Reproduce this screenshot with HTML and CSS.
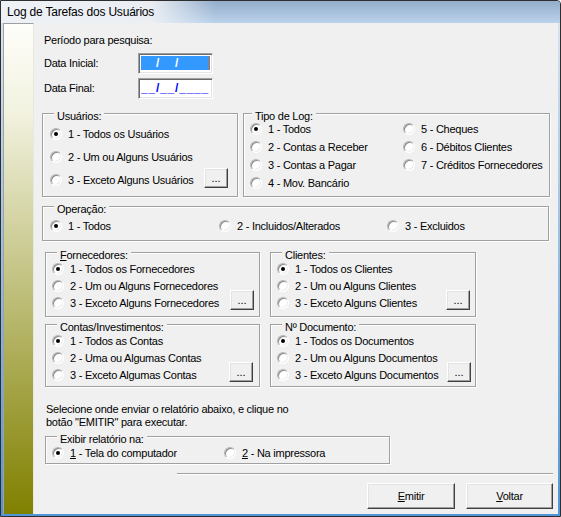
FILE: index.html
```html
<!DOCTYPE html>
<html lang="pt-BR">
<head>
<meta charset="utf-8">
<title>Log de Tarefas dos Usuários</title>
<link rel="stylesheet" href="styles.css">
</head>
<body>
<div class="window">
  <div class="titlebar"><span class="title">Log de Tarefas dos Usuários</span></div>
  <div class="frame">
    <div class="sidebar"></div>
    <main class="content">
      <div class="caption">Período para pesquisa:</div>
      <div class="field-row first">
        <span class="field-label">Data Inicial:</span>
        <span class="input"><span class="mask selected"><span class="blank">__</span>/<span class="blank">__</span>/<span class="blank">____</span></span></span>
      </div>
      <div class="field-row second">
        <span class="field-label">Data Final:</span>
        <span class="input"><span class="mask">__/__/____</span></span>
      </div>

      <div class="group-row row-a">
        <section class="group g-usuarios">
          <div class="legend">Usuários:</div>
          <div class="opts">
            <div class="opt"><span class="radio on"></span>1 - Todos os Usuários</div>
            <div class="opt"><span class="radio"></span>2 - Um ou Alguns Usuários</div>
            <div class="opt"><span class="radio"></span>3 - Exceto Alguns Usuários<button class="more">...</button></div>
          </div>
        </section>
        <section class="group g-tipo">
          <div class="legend">Tipo de Log:</div>
          <div class="opts tipo-grid">
            <div class="opt"><span class="radio on"></span>1 - Todos</div>
            <div class="opt"><span class="radio"></span>2 - Contas a Receber</div>
            <div class="opt"><span class="radio"></span>3 - Contas a Pagar</div>
            <div class="opt"><span class="radio"></span>4 - Mov. Bancário</div>
            <div class="opt"><span class="radio"></span>5 - Cheques</div>
            <div class="opt"><span class="radio"></span>6 - Débitos Clientes</div>
            <div class="opt"><span class="radio"></span>7 - Créditos Fornecedores</div>
          </div>
        </section>
      </div>

      <section class="group g-operacao">
        <div class="legend">Operação:</div>
        <div class="opts inline">
          <div class="opt w1"><span class="radio on"></span>1 - Todos</div>
          <div class="opt w2"><span class="radio"></span>2 - Incluidos/Alterados</div>
          <div class="opt"><span class="radio"></span>3 - Excluidos</div>
        </div>
      </section>

      <div class="group-row row-c">
        <section class="group g-left g-forn">
          <div class="legend"><u>F</u>ornecedores:</div>
          <div class="opts">
            <div class="opt"><span class="radio on"></span>1 - Todos os Fornecedores</div>
            <div class="opt"><span class="radio"></span>2 - Um ou Alguns Fornecedores</div>
            <div class="opt"><span class="radio"></span>3 - Exceto Alguns Fornecedores<button class="more">...</button></div>
          </div>
        </section>
        <section class="group g-right g-cli">
          <div class="legend">Clientes:</div>
          <div class="opts">
            <div class="opt"><span class="radio on"></span>1 - Todos os Clientes</div>
            <div class="opt"><span class="radio"></span>2 - Um ou Alguns Clientes</div>
            <div class="opt"><span class="radio"></span>3 - Exceto Alguns Clientes<button class="more">...</button></div>
          </div>
        </section>
      </div>

      <div class="group-row row-d">
        <section class="group g-left g-contas">
          <div class="legend">Contas/Investimentos:</div>
          <div class="opts">
            <div class="opt"><span class="radio on"></span>1 - Todos as Contas</div>
            <div class="opt"><span class="radio"></span>2 - Uma ou Algumas Contas</div>
            <div class="opt"><span class="radio"></span>3 - Exceto Algumas Contas<button class="more">...</button></div>
          </div>
        </section>
        <section class="group g-right g-doc">
          <div class="legend">Nº Documento:</div>
          <div class="opts">
            <div class="opt"><span class="radio on"></span>1 - Todos os Documentos</div>
            <div class="opt"><span class="radio"></span>2 - Um ou Alguns Documentos</div>
            <div class="opt"><span class="radio"></span>3 - Exceto Alguns Documentos<button class="more">...</button></div>
          </div>
        </section>
      </div>

      <p class="note">Selecione onde enviar o relatório abaixo, e clique no<br>botão "EMITIR" para executar.</p>

      <section class="group g-exibir">
        <div class="legend">Exibir relatório na:</div>
        <div class="opts inline">
          <div class="opt w3"><span class="radio on"></span><u>1</u>&nbsp;- Tela do computador</div>
          <div class="opt"><span class="radio"></span><u>2</u>&nbsp;- Na impressora</div>
        </div>
      </section>

      <div class="separator"></div>

      <div class="actions">
        <button class="btn btn-emitir"><u>E</u>mitir</button>
        <button class="btn btn-voltar"><u>V</u>oltar</button>
      </div>
    </main>
  </div>
</div>
</body>
</html>
```

FILE: styles.css
```css
* { box-sizing: border-box; }

html, body {
  margin: 0;
  padding: 0;
  background: #ffffff;
}

body {
  font-family: "Liberation Sans", Arial, sans-serif;
  font-size: 11px;
  letter-spacing: -0.25px;
  color: #000;
}

.window {
  width: 561px;
  height: 517px;
  border: 1px solid #2e2e2e;
  border-top-right-radius: 4px;
  display: flex;
  flex-direction: column;
  overflow: hidden;
  background: linear-gradient(#dfe7f0, #4f95d8);
}

.titlebar {
  height: 22px;
  flex: none;
  padding-left: 6px;
  line-height: 22px;
  font-size: 12px;
  letter-spacing: -0.2px;
  white-space: nowrap;
  background:
    linear-gradient(to right, rgba(238,241,245,1) 0, rgba(238,241,245,0.95) 150px, rgba(238,241,245,0) 215px),
    linear-gradient(#93adca, #bbd2eb);
}

.frame {
  flex: 1;
  display: flex;
  padding: 0 2px 2px 2px;
  min-height: 0;
}

.sidebar {
  width: 31px;
  flex: none;
  border-left: 1px solid #a0a0a0;
  border-top: 1px solid #a0a0a0;
  border-right: 1px solid #e8e8e0;
  background: linear-gradient(#fefefa, #f2f2e0 18%, #808000);
}

.content {
  flex: 1;
  background: #f0f0f0;
  display: flex;
  flex-direction: column;
  align-items: flex-start;
  padding: 11px 0 0 8px;
}

.caption {
  line-height: 13px;
  margin-left: 2px;
}

.field-row {
  display: flex;
  align-items: center;
  margin-left: 2px;
}
.field-row.first { margin-top: 6px; }
.field-row.second { margin-top: 4px; }

.field-label {
  width: 94px;
  line-height: 13px;
}

.input {
  width: 75px;
  height: 21px;
  background: #fff;
  border: 1px solid;
  border-color: #a0a0a0 #ffffff #ffffff #a0a0a0;
  box-shadow: inset 1px 1px 0 #696969, inset -1px -1px 0 #e3e3e3;
  padding: 2px 0 0 2px;
}

.mask {
  display: block;
  width: 69px;
  height: 14px;
  line-height: 14px;
  font-weight: bold;
  font-size: 12px;
  letter-spacing: 0.8px;
  color: #0000ff;
  white-space: nowrap;
  overflow: hidden;
}

.mask.selected {
  background: #3399ff;
  color: #ffffff;
  border-right: 1px solid #d2691e;
}

.mask .blank { color: #3399ff; }

.group-row {
  display: flex;
  align-items: flex-start;
}

.group {
  border: 1px solid #a0a0a0;
  box-shadow: inset 1px 1px 0 #ffffff, 1px 1px 0 #ffffff;
  display: flex;
  flex-direction: column;
  align-items: stretch;
  flex: none;
}

.legend {
  align-self: flex-start;
  line-height: 12px;
  margin: -4px 0 0 11px;
  padding: 0 3px;
  background: #f0f0f0;
  white-space: nowrap;
}

.opts {
  display: flex;
  flex-direction: column;
  margin-top: var(--mt, 1px);
  gap: var(--gap, 3px);
  padding: 0 var(--pr, 5px) 0 var(--pl, 6px);
}

.opt {
  height: 14px;
  display: flex;
  align-items: center;
  line-height: 13px;
  white-space: nowrap;
}

.radio {
  flex: none;
  width: 12px;
  height: 12px;
  margin-right: 6px;
  border-radius: 50%;
  background: #ffffff;
  border: 1px solid;
  border-color: #b4b4b4 #ffffff #ffffff #b4b4b4;
  box-shadow: inset 1px 1px 0 #8a8a8a, inset -1px -1px 0 #ececec;
  display: flex;
  align-items: center;
  justify-content: center;
}

.radio.on::after {
  content: "";
  width: 4px;
  height: 4px;
  border-radius: 50%;
  background: #000;
}

.more {
  margin-left: auto;
  align-self: flex-start;
  margin-top: -6px;
  margin-bottom: -20px;
  width: 24px;
  height: 20px;
  padding: 0;
  font: inherit;
  letter-spacing: 0;
  color: #000;
  background: #f0f0f0;
  border: 1px solid;
  border-color: #ffffff #404040 #404040 #ffffff;
  box-shadow: inset -1px -1px 0 #a0a0a0, inset 1px 1px 0 #e3e3e3;
  line-height: 16px;
}

/* Row A */
.row-a { margin-top: 14px; }
.g-usuarios { width: 196px; height: 84px; --mt: 5px; --gap: 9px; --pl: 7px; --pr: 9px; }
.g-usuarios .more { margin-top: -5px; }
.g-tipo { width: 307px; height: 84px; margin-left: 5px; --mt: 0px; --gap: 4px; --pl: 6px; }
.g-tipo .legend { margin-left: 8px; }

.tipo-grid {
  display: grid;
  grid-template-columns: 149px auto;
  grid-template-rows: repeat(4, 14px);
  grid-auto-flow: column;
  row-gap: 4px;
}

/* Operação */
.g-operacao { width: 507px; height: 35px; margin-top: 9px; --mt: 4px; --pl: 7px; }
.opts.inline { flex-direction: row; }
.opt.w1 { width: 166px; }
.opt.w2 { width: 165px; }
.opt.w3 { width: 169px; }

/* Rows C and D */
.row-c { margin-top: 11px; margin-left: 3px; }
.row-d { margin-top: 7px; margin-left: 3px; }
.g-left { width: 215px; }
.g-right { width: 206px; margin-left: 10px; }
.row-c .group { height: 65px; --mt: 1px; --gap: 3px; --pl: 6px; --pr: 5px; }
.row-d .group { height: 63px; --mt: 1px; --gap: 3px; --pl: 6px; --pr: 6px; }
.row-d .g-doc { --pr: 4px; }

.note {
  margin: 16px 0 0 4px;
  line-height: 13px;
  white-space: nowrap;
}

.g-exibir { width: 345px; height: 28px; margin-top: 7px; margin-left: 3px; --mt: 1px; --pl: 6px; }

.separator {
  margin: 9px 0 0 135px;
  width: 376px;
  height: 2px;
  border-top: 1px solid #a0a0a0;
  border-bottom: 1px solid #ffffff;
}

.actions {
  margin-top: 8px;
  align-self: stretch;
  display: flex;
  justify-content: flex-end;
  gap: 11px;
  padding-right: 5px;
}

.btn {
  height: 26px;
  padding: 0;
  font: inherit;
  letter-spacing: inherit;
  color: #000;
  background: #f0f0f0;
  border: 1px solid;
  border-color: #ffffff #404040 #404040 #ffffff;
  box-shadow: inset -1px -1px 0 #a0a0a0, inset 1px 1px 0 #e3e3e3;
}
.btn-emitir { width: 88px; }
.btn-voltar { width: 87px; }
```
